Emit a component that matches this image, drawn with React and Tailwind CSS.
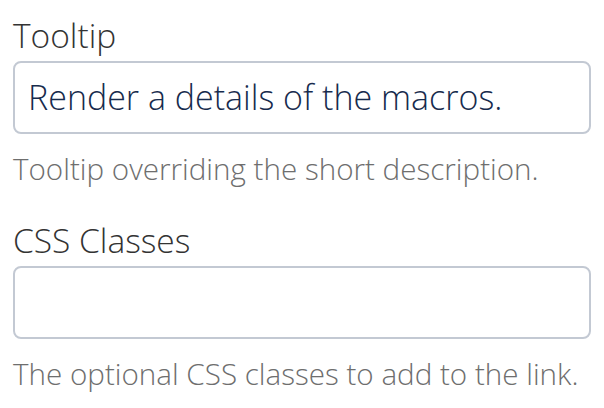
export default function App() {
  return (
    <div className="min-h-screen bg-white px-[13px] pt-[15px] font-['Open_Sans',sans-serif] font-[350]">
      <div>
        <label className="block text-[33.5px] leading-[40px] text-[#333333]">Tooltip</label>
        <div className="mt-[6px] flex h-[73px] items-center rounded-[8px] border-2 border-[#c3c9d3] px-[13px] text-[34px] text-[#172b4d]">
          Render a details of the macros.
        </div>
        <p className="mt-[15px] text-[29.6px] leading-[40px] text-[#6e6e6e]">
          Tooltip overriding the short description.
        </p>
      </div>
      <div className="mt-[31px]">
        <label className="block text-[33.5px] leading-[40px] text-[#333333]">CSS Classes</label>
        <div className="mt-[6px] h-[73px] rounded-[8px] border-2 border-[#c3c9d3]" />
        <p className="mt-[15px] text-[29.6px] leading-[40px] text-[#6e6e6e]">
          The optional CSS classes to add to the link.
        </p>
      </div>
    </div>
  );
}
